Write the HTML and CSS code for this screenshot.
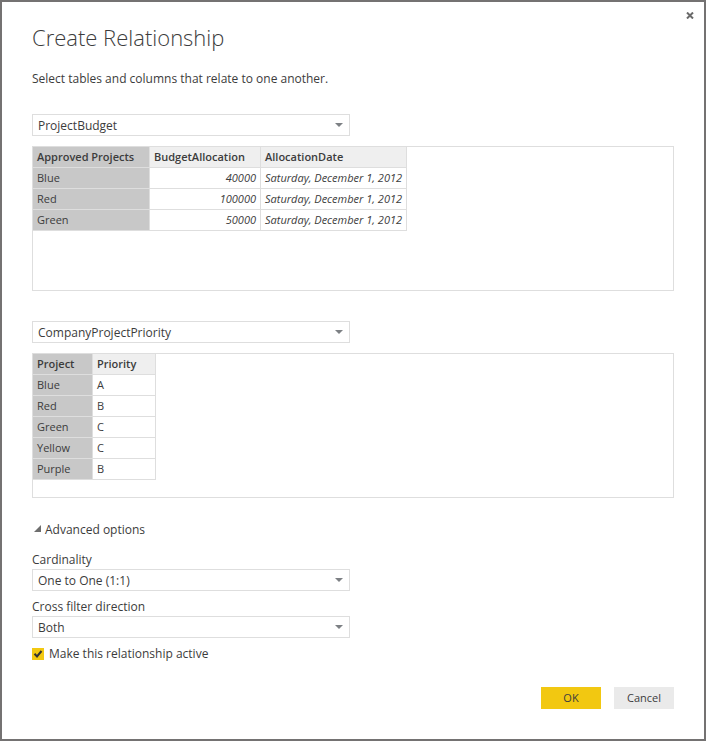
FILE: index.html
```html
<!DOCTYPE html>
<html lang="en">
<head>
<meta charset="utf-8">
<title>Create Relationship</title>
<link rel="stylesheet" href="styles.css">
</head>
<body>
<main class="dialog" role="dialog" aria-labelledby="dialog-title">
  <button class="close" type="button" aria-label="Close">
    <svg viewBox="0 0 8 7" width="8" height="7" aria-hidden="true"><path d="M1 0.5 L7 6.5 M7 0.5 L1 6.5"/></svg>
  </button>
  <h1 class="title" id="dialog-title">Create Relationship</h1>
  <p class="intro">Select tables and columns that relate to one another.</p>

  <section class="source">
    <div class="dropdown">
      <select aria-label="First table"><option>ProjectBudget</option></select>
      <svg class="arrow" viewBox="0 0 8 4" aria-hidden="true"><path d="M0 0H8L4 4Z"/></svg>
    </div>
    <div class="preview">
      <table class="grid">
        <colgroup><col class="col-project"><col class="col-budget"><col class="col-date"></colgroup>
        <thead><tr><th class="selected">Approved Projects</th><th>BudgetAllocation</th><th>AllocationDate</th></tr></thead>
        <tbody>
          <tr><td class="selected">Blue</td><td class="number">40000</td><td class="date">Saturday, December 1, 2012</td></tr>
          <tr><td class="selected">Red</td><td class="number">100000</td><td class="date">Saturday, December 1, 2012</td></tr>
          <tr><td class="selected">Green</td><td class="number">50000</td><td class="date">Saturday, December 1, 2012</td></tr>
        </tbody>
      </table>
    </div>
  </section>

  <section class="source">
    <div class="dropdown">
      <select aria-label="Second table"><option>CompanyProjectPriority</option></select>
      <svg class="arrow" viewBox="0 0 8 4" aria-hidden="true"><path d="M0 0H8L4 4Z"/></svg>
    </div>
    <div class="preview">
      <table class="grid">
        <colgroup><col class="col-name"><col class="col-priority"></colgroup>
        <thead><tr><th class="selected">Project</th><th>Priority</th></tr></thead>
        <tbody>
          <tr><td class="selected">Blue</td><td>A</td></tr>
          <tr><td class="selected">Red</td><td>B</td></tr>
          <tr><td class="selected">Green</td><td>C</td></tr>
          <tr><td class="selected">Yellow</td><td>C</td></tr>
          <tr><td class="selected">Purple</td><td>B</td></tr>
        </tbody>
      </table>
    </div>
  </section>

  <section class="options">
    <button class="advanced" type="button" aria-expanded="true">
      <svg viewBox="0 0 7 11" width="7" height="11" aria-hidden="true"><path d="M7 0V7H0Z"/></svg>
      <span>Advanced options</span>
    </button>

    <div class="field">
      <label for="cardinality">Cardinality</label>
      <div class="dropdown">
        <select id="cardinality"><option>One to One (1:1)</option></select>
        <svg class="arrow" viewBox="0 0 8 4" aria-hidden="true"><path d="M0 0H8L4 4Z"/></svg>
      </div>
    </div>
    <div class="field">
      <label for="direction">Cross filter direction</label>
      <div class="dropdown">
        <select id="direction"><option>Both</option></select>
        <svg class="arrow" viewBox="0 0 8 4" aria-hidden="true"><path d="M0 0H8L4 4Z"/></svg>
      </div>
    </div>
    <label class="check">
      <span class="box">
        <input type="checkbox" checked>
        <svg viewBox="0 0 12 12" aria-hidden="true"><path d="M2.5 5.8L5 8.5L9.5 3"/></svg>
      </span>
      <span>Make this relationship active</span>
    </label>
  </section>

  <footer class="actions">
    <button class="action primary" type="button">OK</button>
    <button class="action" type="button">Cancel</button>
  </footer>
</main>
</body>
</html>
```

FILE: styles.css
```css
* {
  box-sizing: border-box;
}

body {
  margin: 0;
  background: #fff;
  color: #3c3c3c;
  font: 12px/16px "Open Sans", "Noto Sans", sans-serif;
}

button,
select {
  margin: 0;
  border: 0;
  border-radius: 0;
  color: inherit;
  font: inherit;
}

.dialog {
  position: relative;
  min-height: 100vh;
  padding: 17px 30px 30px;
  border: 2px solid #747272;
}

.close {
  position: absolute;
  top: 8px;
  right: 9px;
  display: grid;
  place-items: center;
  width: 10px;
  height: 10px;
  padding: 0;
  background: none;
}

.close path {
  fill: none;
  stroke: #6a6a6a;
  stroke-width: 2;
}

.title {
  margin: 0;
  font-size: 22px;
  font-weight: 300;
  line-height: 36px;
}

.intro {
  margin: 14px 0 25px;
  line-height: 20px;
}

.source + .source {
  margin-top: 30px;
}

.dropdown {
  position: relative;
  max-width: 318px;
}

.dropdown select {
  display: block;
  width: 100%;
  height: 22px;
  padding: 2px 24px 0 5px;
  border: 1px solid #dedede;
  background: #fff;
  appearance: none;
}

.arrow {
  position: absolute;
  top: 9px;
  right: 7px;
  width: 8px;
  height: 4px;
  fill: #7d8084;
  pointer-events: none;
}

.preview {
  min-height: 145px;
  margin-top: 10px;
  border: 1px solid #dedede;
}

.grid {
  border-spacing: 0;
  table-layout: fixed;
  width: 1px;
  font-size: 11px;
  white-space: nowrap;
}

.col-project {
  width: 117px;
}

.col-budget {
  width: 111px;
}

.col-date {
  width: 146px;
}

.col-name {
  width: 60px;
}

.col-priority {
  width: 63px;
}

.grid th,
.grid td {
  height: 21px;
  padding: 0 4px;
  border: solid #dedede;
  border-width: 0 1px 1px 0;
  text-align: left;
}

.grid th {
  background: #efefef;
  font-weight: 600;
}

.grid .selected {
  background: #c8c8c8;
}

.grid .number {
  font-style: italic;
  text-align: right;
}

.grid .date {
  font-style: italic;
}

.options {
  margin-top: 24px;
}

.advanced {
  display: flex;
  align-items: center;
  gap: 4px;
  margin-bottom: 14px;
  padding: 0 0 0 2px;
  background: none;
}

.advanced svg {
  fill: #6e6e6e;
}

.field {
  margin-bottom: 8px;
}

.field label {
  display: block;
  margin-bottom: 1px;
}

.check {
  display: flex;
  align-items: center;
  gap: 5px;
  width: fit-content;
}

.box {
  display: grid;
  width: 12px;
  height: 12px;
}

.box input,
.box svg {
  grid-area: 1 / 1;
  width: 12px;
  height: 12px;
  margin: 0;
}

.box input {
  appearance: none;
}

.box input:checked {
  background: #f2c811;
}

.box svg {
  fill: none;
  stroke: #333;
  stroke-width: 2;
  pointer-events: none;
}

.box input:not(:checked) + svg {
  visibility: hidden;
}

.actions {
  display: flex;
  justify-content: flex-end;
  gap: 13px;
  margin-top: 25px;
}

.action {
  width: 60px;
  height: 22px;
  padding: 0;
  background: #eaeaea;
  font-size: 11px;
}

.primary {
  background: #f2c811;
}
```
